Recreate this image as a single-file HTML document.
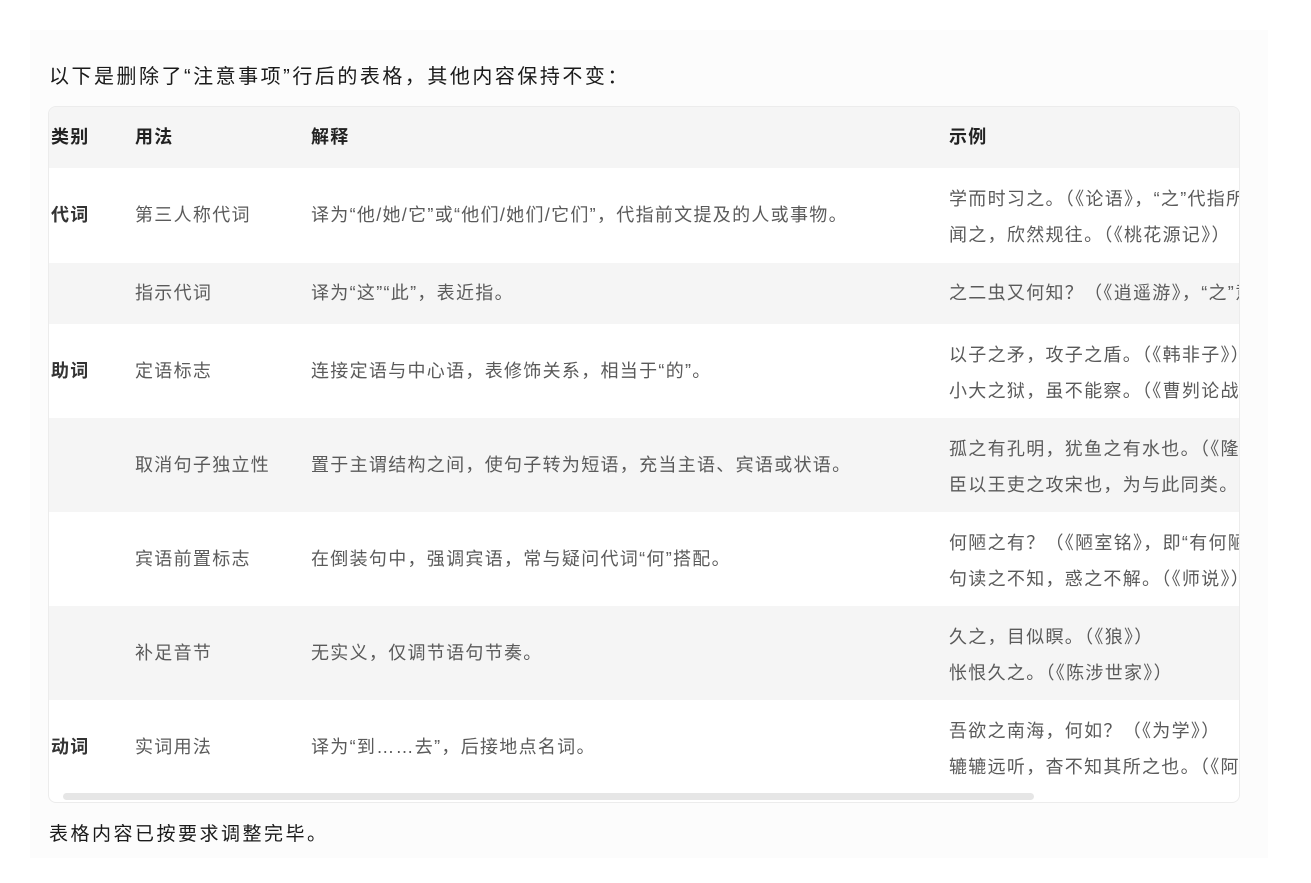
<!DOCTYPE html>
<html><head><meta charset="utf-8"><style>
*{margin:0;padding:0;box-sizing:border-box}
body{width:1311px;height:883px;background:#fff;font-family:"Liberation Sans","Noto Sans CJK SC",sans-serif;position:relative;overflow:hidden}
.panel{position:absolute;left:30px;top:30px;width:1238px;height:828px;background:#fcfcfc}
.title{position:absolute;left:49px;top:60px;font-size:20px;letter-spacing:2.5px;color:#1a1a1a}
.foot{position:absolute;left:49px;top:819px;font-size:19px;letter-spacing:2.5px;color:#1a1a1a}
.tbl{position:absolute;left:48px;top:106px;width:1192px;height:697px;border:1px solid #ececec;border-radius:8px;overflow:hidden;background:#fff}
.row{position:absolute;left:0;width:1190px}
.g{background:#f5f5f5}
.c{position:absolute;font-size:18px;letter-spacing:1.3px;color:#5a5a5a;white-space:nowrap;line-height:36px}
.c1{left:2px;font-weight:bold;color:#333}
.c2{left:86px}
.c3{left:262px}
.c4{left:900px}
.h .c{font-weight:bold;color:#222}
.sb{position:absolute;left:14px;top:686px;width:971px;height:7px;border-radius:4px;background:#e6e6e6}
</style></head><body>
<div class="panel"></div>
<div class="title">以下是删除了“注意事项”行后的表格，其他内容保持不变：</div>
<div class="tbl">
 <div class="row g h" style="top:0;height:61px"><div class="c c1" style="top:12px">类别</div><div class="c c2" style="top:12px">用法</div><div class="c c3" style="top:12px">解释</div><div class="c c4" style="top:12px">示例</div></div>
 <div class="row" style="top:61px;height:95px"><div class="c c1" style="top:29px">代词</div><div class="c c2" style="top:29px">第三人称代词</div><div class="c c3" style="top:29px">译为“他/她/它”或“他们/她们/它们”，代指前文提及的人或事物。</div><div class="c c4" style="top:13px">学而时习之。（《论语》，“之”代指所学知识）<br>闻之，欣然规往。（《桃花源记》）</div></div>
 <div class="row g" style="top:156px;height:61px"><div class="c c2" style="top:12px">指示代词</div><div class="c c3" style="top:12px">译为“这”“此”，表近指。</div><div class="c c4" style="top:12px">之二虫又何知？（《逍遥游》，“之”意为“这”）</div></div>
 <div class="row" style="top:217px;height:94px"><div class="c c1" style="top:29px">助词</div><div class="c c2" style="top:29px">定语标志</div><div class="c c3" style="top:29px">连接定语与中心语，表修饰关系，相当于“的”。</div><div class="c c4" style="top:13px">以子之矛，攻子之盾。（《韩非子》）<br>小大之狱，虽不能察。（《曹刿论战》）</div></div>
 <div class="row g" style="top:311px;height:94px"><div class="c c2" style="top:29px">取消句子独立性</div><div class="c c3" style="top:29px">置于主谓结构之间，使句子转为短语，充当主语、宾语或状语。</div><div class="c c4" style="top:13px">孤之有孔明，犹鱼之有水也。（《隆中对》）<br>臣以王吏之攻宋也，为与此同类。（《公输》）</div></div>
 <div class="row" style="top:405px;height:94px"><div class="c c2" style="top:29px">宾语前置标志</div><div class="c c3" style="top:29px">在倒装句中，强调宾语，常与疑问代词“何”搭配。</div><div class="c c4" style="top:13px">何陋之有？（《陋室铭》，即“有何陋”）<br>句读之不知，惑之不解。（《师说》）</div></div>
 <div class="row g" style="top:499px;height:94px"><div class="c c2" style="top:29px">补足音节</div><div class="c c3" style="top:29px">无实义，仅调节语句节奏。</div><div class="c c4" style="top:13px">久之，目似瞑。（《狼》）<br>怅恨久之。（《陈涉世家》）</div></div>
 <div class="row" style="top:593px;height:104px"><div class="c c1" style="top:29px">动词</div><div class="c c2" style="top:29px">实词用法</div><div class="c c3" style="top:29px">译为“到……去”，后接地点名词。</div><div class="c c4" style="top:13px">吾欲之南海，何如？（《为学》）<br>辘辘远听，杳不知其所之也。（《阿房宫赋》）</div></div>
 <div class="sb"></div>
</div>
<div class="foot">表格内容已按要求调整完毕。</div>
</body></html>
